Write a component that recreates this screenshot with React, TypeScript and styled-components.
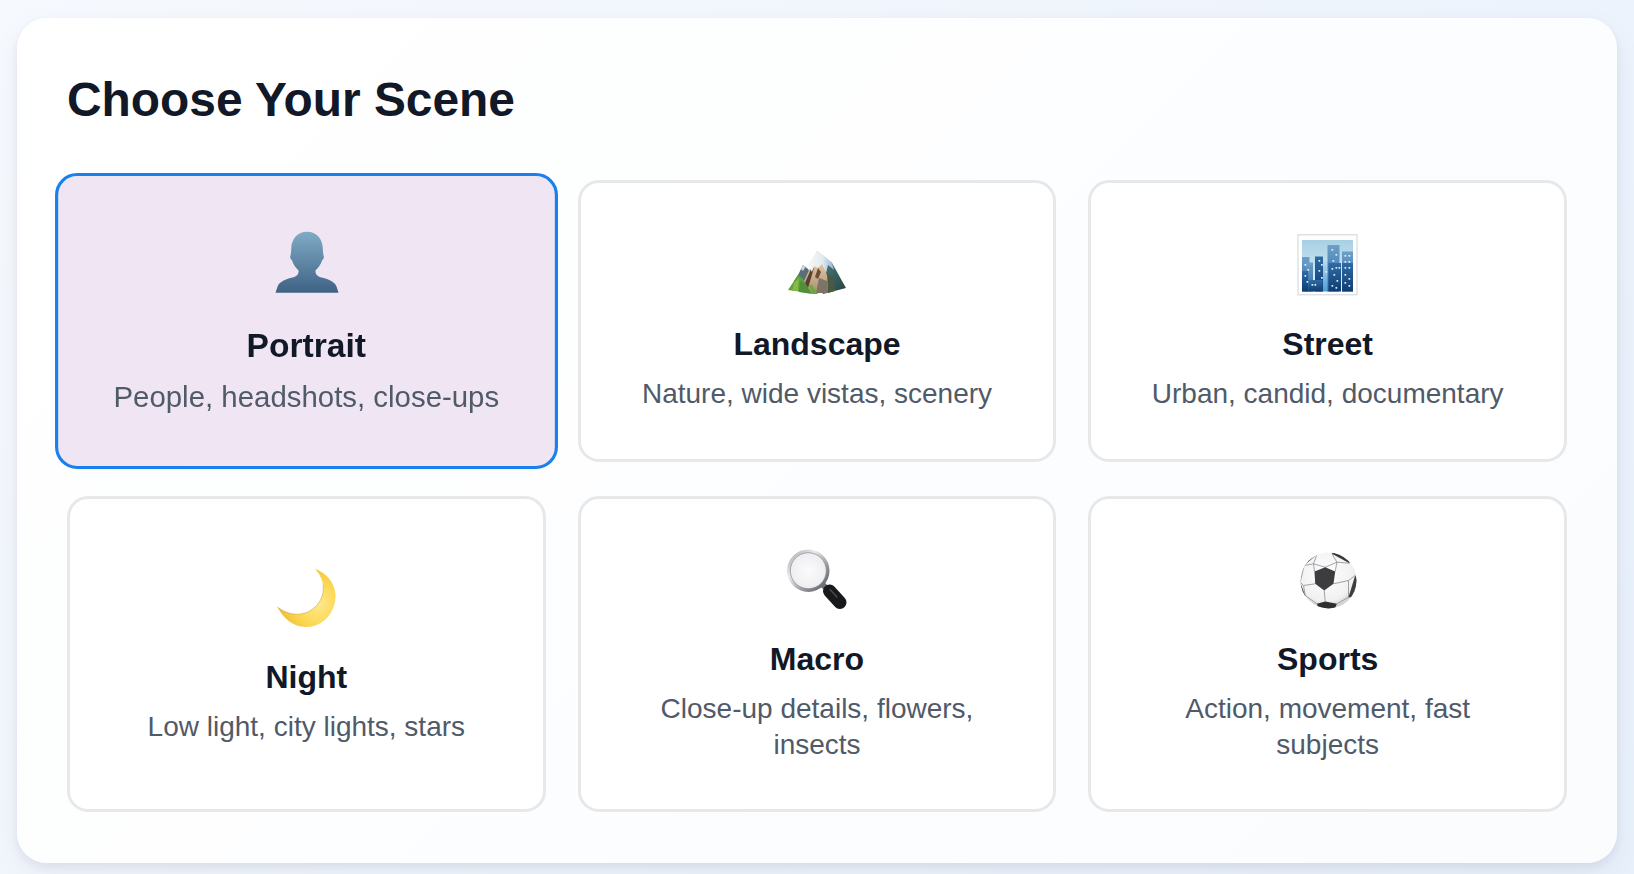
import React from "react";
import styled, { createGlobalStyle } from "styled-components";

const GlobalStyle = createGlobalStyle`
  html, body {
    margin: 0;
    padding: 0;
    height: 100%;
  }
  body {
    background: linear-gradient(135deg, #f6f9fe 0%, #e8f0fb 100%);
    font-family: "Liberation Sans", Arial, sans-serif;
  }
`;

const Page = styled.div`
  box-sizing: border-box;
  width: 100%;
  height: 874px;
  padding: 18px 17px 11px;
  overflow: hidden;
`;

const Panel = styled.main`
  box-sizing: border-box;
  height: 845px;
  padding: 51px 50px;
  border-radius: 30px;
  background: linear-gradient(135deg, #ffffff 0%, #fafcfe 100%);
  box-shadow: 0 10px 30px rgba(30, 40, 60, 0.05), 0 4px 8px rgba(30, 40, 60, 0.07);
`;

const Title = styled.h1`
  margin: 0 0 49px;
  font-size: 47.9px;
  line-height: 62px;
  font-weight: 700;
  color: #111827;
`;

const Grid = styled.div`
  display: grid;
  grid-template-columns: repeat(3, 1fr);
  grid-template-rows: 282px 316px;
  gap: 34px 32px;
`;

const Card = styled.div<{ $selected?: boolean }>`
  box-sizing: border-box;
  display: flex;
  flex-direction: column;
  align-items: center;
  justify-content: center;
  padding: 0 48px;
  text-align: center;
  border-radius: 21px;
  border: ${(p) => (p.$selected ? "3.8px" : "3.5px")} solid ${(p) => (p.$selected ? "#1a80ee" : "#e6e8ea")};
  background: ${(p) => (p.$selected ? "#f0e6f3" : "#ffffff")};
  transform: ${(p) => (p.$selected ? "scale(1.05)" : "none")};
`;

const IconSlot = styled.svg`
  display: block;
  width: 64px;
  height: 64px;
  margin-bottom: 31px;
  flex: none;
  overflow: visible;
  filter: blur(0.35px);
`;

const CardTitle = styled.h3`
  margin: 0 0 14px;
  font-size: 32px;
  line-height: 36px;
  font-weight: 700;
  color: #111827;
`;

const CardText = styled.p`
  margin: 0;
  font-size: 28px;
  line-height: 36px;
  color: #505a68;
`;

function PersonIcon() {
  return (
    <IconSlot viewBox="0 0 64 64">
      <defs>
        <linearGradient id="bust" x1="0" y1="0" x2="0" y2="1">
          <stop offset="0" stopColor="#80abc6" />
          <stop offset="1" stopColor="#3f6285" />
        </linearGradient>
      </defs>
      <path
        fill="url(#bust)"
        transform="translate(1 0)"
        d="M32 5C41 5 47 12 47 21L47.5 27C48.5 29 48 31 46.5 32C45 37 42 40 40 42C40 45 41 47 44 48C52 50 58 52 60 57L62 63L2 63L4 57C6 52 12 50 20 48C23 47 24 45 24 42C22 40 19 37 17.5 32C16 31 15.5 29 16.5 27L17 21C17 12 23 5 32 5Z"
      />
    </IconSlot>
  );
}

function MountainIcon() {
  return (
    <IconSlot viewBox="0 0 64 64">
      <defs>
        <linearGradient id="snow" x1="0" y1="0" x2="1" y2="0">
          <stop offset="0" stopColor="#f6f7f8" />
          <stop offset="0.55" stopColor="#e4ebf0" />
          <stop offset="1" stopColor="#8db6d2" />
        </linearGradient>
        <linearGradient id="ridge" x1="0" y1="0" x2="1" y2="1">
          <stop offset="0" stopColor="#5d8a96" />
          <stop offset="1" stopColor="#24423c" />
        </linearGradient>
        <linearGradient id="rock" x1="0" y1="0" x2="0" y2="1">
          <stop offset="0" stopColor="#e6c9a6" />
          <stop offset="1" stopColor="#a89070" />
        </linearGradient>
      </defs>
      <polygon fill="url(#ridge)" points="32,20 47,32 61,57 42,62 38,63 30,45" />
      <polygon fill="#566f78" points="18,34 23,38 27,45 18,54 9,50 13,44" />
      <polygon fill="#cfd9de" points="18,34 20.5,36 18,40 16,38" />
      <polygon fill="#5ea23a" points="3,59 13,44 17,47 22,55 24,62" />
      <polygon fill="#86b84a" points="9,52 14,47 13,60 7,60" />
      <polygon fill="url(#rock)" points="26,35 37,31 41,42 45,50 42,62 24,62 19,50" />
      <polygon fill="#4a5a40" points="42,42 48,47 50,60 43,62" />
      <polygon fill="#7b7467" points="34,47 42,50 43,62 31,62" />
      <polygon fill="#57402f" points="26,38 29,37 26,47 23,57 20,52" />
      <polygon fill="#6a4e3a" points="33,37 36,41 33,48 30,46" />
      <polygon fill="#4f8f38" points="15,50 20,52 27,63 14,61" />
      <polygon fill="#6aa842" points="24,54 27,54 33,63 27,63" />
      <polygon fill="url(#snow)" points="32,20 38,24 47,32 49,39 43,34 41,42 37,33 33,37 29,35 27,41 23,34" />
    </IconSlot>
  );
}

const backBlocks = [
  { x: 7.5, y: 25, w: 7.5, h: 34.5 },
  { x: 11.5, y: 30.5, w: 7, h: 29 },
  { x: 33, y: 13, w: 12, h: 46.5 },
  { x: 47.5, y: 19.5, w: 11, h: 40 },
];

const frontBlocks = [
  { x: 7.5, y: 39, w: 6, h: 20.5 },
  { x: 20.5, y: 24.5, w: 8, h: 35 },
  { x: 14, y: 48, w: 14, h: 11.5 },
  { x: 34, y: 31, w: 12.5, h: 28.5 },
  { x: 47.5, y: 31, w: 11, h: 28.5 },
];

const cityWindows = [
  [10, 32], [13, 37], [10, 43], [12, 49], [17, 52], [20, 52], [24, 28], [26.5, 32], [24, 38], [26.5, 45],
  [37, 17], [41, 22], [38, 28], [37, 36], [41, 35], [44, 35], [39, 42], [42, 48], [37, 53], [41, 55],
  [50, 23], [54, 23], [50, 29], [54, 29], [50, 35], [54, 35], [50, 42], [54, 46], [50, 50], [54, 53], [31, 39],
];

function CityIcon() {
  return (
    <IconSlot viewBox="0 0 64 64">
      <defs>
        <linearGradient id="sky" x1="0" y1="0" x2="0" y2="1">
          <stop offset="0" stopColor="#a6d0e4" />
          <stop offset="1" stopColor="#e4f3fa" />
        </linearGradient>
        <linearGradient id="backTower" x1="0" y1="0" x2="0" y2="1">
          <stop offset="0" stopColor="#6d9fc8" />
          <stop offset="1" stopColor="#2a6aa6" />
        </linearGradient>
        <linearGradient id="frontTower" x1="0" y1="0" x2="0" y2="1">
          <stop offset="0" stopColor="#2f6ba5" />
          <stop offset="1" stopColor="#0f3c72" />
        </linearGradient>
        <linearGradient id="glow" x1="0" y1="0" x2="0" y2="1">
          <stop offset="0" stopColor="#b8dcee" />
          <stop offset="1" stopColor="#4d9fd6" />
        </linearGradient>
      </defs>
      <g transform="translate(-1.5 1)">
        <rect x="3.5" y="2.8" width="59" height="60" fill="#ffffff" stroke="#cfd3d6" />
        <rect x="7.5" y="8" width="51" height="51.5" fill="url(#sky)" />
        <rect x="28.5" y="28" width="5" height="31.5" fill="url(#glow)" />
        {backBlocks.map((b, i) => (
          <rect key={i} x={b.x} y={b.y} width={b.w} height={b.h} fill="url(#backTower)" />
        ))}
        {frontBlocks.map((b, i) => (
          <rect key={i} x={b.x} y={b.y} width={b.w} height={b.h} fill="url(#frontTower)" />
        ))}
        {cityWindows.map(([x, y], i) => (
          <rect key={i} x={x} y={y} width="1.7" height="1.7" fill="#dff1fa" />
        ))}
      </g>
    </IconSlot>
  );
}

function MoonIcon() {
  return (
    <IconSlot viewBox="0 0 64 64">
      <defs>
        <radialGradient id="moon" cx="0.7" cy="0.6" r="0.72">
          <stop offset="0" stopColor="#ffe98c" />
          <stop offset="0.55" stopColor="#fcd64f" />
          <stop offset="1" stopColor="#edb934" />
        </radialGradient>
      </defs>
      <g transform="translate(1 0)">
        <path
          fill="url(#moon)"
          d="M40 5C52 9 61 20 60.5 33C60 50 47 63 31 63C18 63 8 54 2.5 43C10 49 20 52 30 49C42 45 50 33 48 21C47 14 44 9 40 5Z"
        />
        <path
          fill="none"
          stroke="#b98a2c"
          strokeOpacity="0.55"
          strokeWidth="0.8"
          d="M48 21C50 33 42 45 30 49C20 52 10 49 2.5 43"
        />
      </g>
    </IconSlot>
  );
}

function LensIcon() {
  return (
    <IconSlot viewBox="0 0 64 64">
      <defs>
        <linearGradient id="rim" x1="0" y1="0" x2="1" y2="1">
          <stop offset="0" stopColor="#9da0a5" />
          <stop offset="0.35" stopColor="#e9eaec" />
          <stop offset="0.7" stopColor="#8b8e93" />
          <stop offset="1" stopColor="#4e5155" />
        </linearGradient>
        <radialGradient id="glass" cx="0.5" cy="0.5" r="0.55">
          <stop offset="0" stopColor="#fbfbfc" />
          <stop offset="1" stopColor="#ededf1" />
        </radialGradient>
      </defs>
      <g transform="translate(0 1)">
        <line x1="37" y1="37" x2="44" y2="44" stroke="#6d7074" strokeWidth="6" />
        <line x1="44.5" y1="44" x2="55" y2="55.5" stroke="#18191c" strokeWidth="13" strokeLinecap="round" />
        <line x1="45" y1="42.5" x2="52" y2="50" stroke="#4a4c50" strokeWidth="1.4" strokeLinecap="round" />
        <circle cx="23.3" cy="23.7" r="21.2" fill="url(#rim)" />
        <circle cx="23.3" cy="23.7" r="18" fill="url(#glass)" stroke="#85878b" strokeWidth="0.7" />
      </g>
    </IconSlot>
  );
}

function BallIcon() {
  return (
    <IconSlot viewBox="0 0 64 64">
      <defs>
        <radialGradient id="leather" cx="0.45" cy="0.38" r="0.72">
          <stop offset="0" stopColor="#ffffff" />
          <stop offset="0.68" stopColor="#f1f1f2" />
          <stop offset="1" stopColor="#b4b4b6" />
        </radialGradient>
        <clipPath id="ballClip">
          <circle cx="33" cy="33" r="28" />
        </clipPath>
      </defs>
      <g transform="translate(-0.5 1.5)">
        <circle cx="33" cy="33" r="28" fill="url(#leather)" />
        <g clipPath="url(#ballClip)">
          <g stroke="#8d8d90" strokeWidth="0.8" fill="none">
            <path d="M21.4 7L18 16.3L29.7 19.7L41.4 14.7L36.4 6.3" />
            <path d="M29.7 19.7V24M18 16.3L19 24M41.4 14.7L39.7 24" />
            <path d="M41.4 14.7L54 15.7M18 16.3L8.7 18L4.7 34.7L8 38" />
            <path d="M19.7 36.3L8 38L9.7 48L21.4 56.3" />
            <path d="M38 36.3L53 33L59.7 28M53 33V49.7L41.4 56.3" />
            <path d="M28.7 43L29.7 54" />
          </g>
          <polygon fill="#3d3d40" points="19,24 29.7,19.7 39.7,24 38,36.3 28.7,43 19.7,36.3" />
          <polygon fill="#38383b" points="8.7,18 21.4,7 17,3 5,12" />
          <polygon fill="#38383b" points="36.4,6.3 54,15.7 56,8 40,1" />
          <polygon fill="#3d3d40" points="59.7,28 53,49.7 58,50 64,36" />
          <polygon fill="#3d3d40" points="4.7,34.7 9.7,48 8,52 2,40" />
          <polygon fill="#2f2f32" points="21.4,56.3 29.7,54 41.4,56.3 38,64 24,64" />
        </g>
      </g>
    </IconSlot>
  );
}

const scenes = [
  { title: "Portrait", text: "People, headshots, close-ups", Icon: PersonIcon, selected: true },
  { title: "Landscape", text: "Nature, wide vistas, scenery", Icon: MountainIcon },
  { title: "Street", text: "Urban, candid, documentary", Icon: CityIcon },
  { title: "Night", text: "Low light, city lights, stars", Icon: MoonIcon },
  { title: "Macro", text: "Close-up details, flowers, insects", Icon: LensIcon },
  { title: "Sports", text: "Action, movement, fast subjects", Icon: BallIcon },
];

export default function App() {
  return (
    <Page>
      <GlobalStyle />
      <Panel>
        <Title>Choose Your Scene</Title>
        <Grid>
          {scenes.map(({ title, text, Icon, selected }) => (
            <Card key={title} $selected={selected}>
              <Icon />
              <CardTitle>{title}</CardTitle>
              <CardText>{text}</CardText>
            </Card>
          ))}
        </Grid>
      </Panel>
    </Page>
  );
}
